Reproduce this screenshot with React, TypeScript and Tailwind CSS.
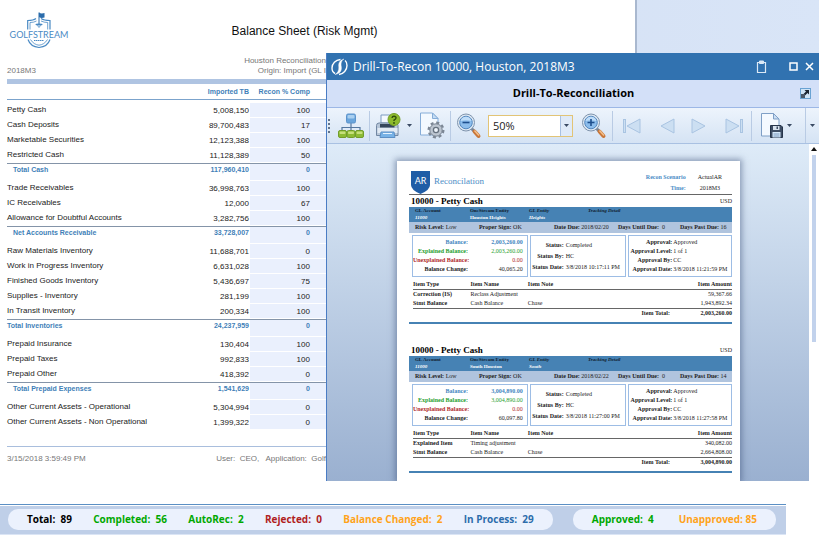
import { ReactNode } from "react";

interface BalanceRow {
  name: string;
  amount: string;
  percent: string;
  total?: boolean;
  indent?: boolean;
}

const balanceRows: BalanceRow[] = [
  { name: "Petty Cash", amount: "5,008,150", percent: "100" },
  { name: "Cash Deposits", amount: "89,700,483", percent: "17" },
  { name: "Marketable Securities", amount: "12,123,388", percent: "100" },
  { name: "Restricted Cash", amount: "11,128,389", percent: "50" },
  { name: "Total Cash", amount: "117,960,410", percent: "0", total: true, indent: true },
  { name: "Trade Receivables", amount: "36,998,763", percent: "100" },
  { name: "IC Receivables", amount: "12,000", percent: "67" },
  { name: "Allowance for Doubtful Accounts", amount: "3,282,756", percent: "100" },
  { name: "Net Accounts Receivable", amount: "33,728,007", percent: "0", total: true, indent: true },
  { name: "Raw Materials Inventory", amount: "11,688,701", percent: "0" },
  { name: "Work in Progress Inventory", amount: "6,631,028", percent: "100" },
  { name: "Finished Goods Inventory", amount: "5,436,697", percent: "75" },
  { name: "Supplies - Inventory", amount: "281,199", percent: "100" },
  { name: "In Transit Inventory", amount: "200,334", percent: "100" },
  { name: "Total Inventories", amount: "24,237,959", percent: "0", total: true },
  { name: "Prepaid Insurance", amount: "130,404", percent: "100" },
  { name: "Prepaid Taxes", amount: "992,833", percent: "100" },
  { name: "Prepaid Other", amount: "418,392", percent: "0" },
  { name: "Total Prepaid Expenses", amount: "1,541,629", percent: "0", total: true, indent: true },
  { name: "Other Current Assets - Operational", amount: "5,304,994", percent: "0" },
  { name: "Other Current Assets - Non Operational", amount: "1,399,322", percent: "0" },
];

interface Recon {
  entity: string;
  glEntity: string;
  dateDue: string;
  pastDue: string;
  balance: string;
  change: string;
  statusDate: string;
  approvalDate: string;
  items: string[][];
}

const recons: Recon[] = [
  {
    entity: "Houston Heights",
    glEntity: "Heights",
    dateDue: "2018/02/20",
    pastDue: "16",
    balance: "2,003,260.00",
    change: "40,065.20",
    statusDate: "3/8/2018 10:17:11 PM",
    approvalDate: "3/8/2018 11:21:59 PM",
    items: [
      ["Correction (IS)", "Reclass Adjustment", "", "59,367.66"],
      ["Stmt Balance", "Cash Balance", "Chase", "1,943,892.34"],
    ],
  },
  {
    entity: "South Houston",
    glEntity: "South",
    dateDue: "2018/02/22",
    pastDue: "14",
    balance: "3,004,890.00",
    change: "60,097.80",
    statusDate: "3/8/2018 11:27:00 PM",
    approvalDate: "3/8/2018 11:27:58 PM",
    items: [
      ["Explained Item", "Timing adjustment", "", "340,082.00"],
      ["Stmt Balance", "Cash Balance", "Chase", "2,664,808.00"],
    ],
  },
];

function GolfstreamLogo() {
  return (
    <svg width="62" height="40" viewBox="0 0 62 40" fill="none" stroke="#4a8ac4" role="img" aria-label="Golfstream">
      <path d="M19.700 17.500V8.500Q25.500 8.500 28 6.500M33 6.500Q36 8.500 42 8.500V17.500" strokeWidth="1.200" />
      <path d="M22 17.500V10.500Q26 10.500 28.500 9M33 9Q36 10.500 39.700 10.500V17.500" strokeWidth="0.800" />
      <path d="M20 27.500C21.500 32 26 35 31 35.500C36 35 40.500 32 42 27.500" strokeWidth="1.200" />
      <path d="M22.500 27.500C24.500 31 28 33 31 33.200C34 33 37.500 31 39.500 27.500" strokeWidth="0.800" />
      <path d="M31 0.500V12" stroke="#2b6cab" strokeWidth="1" />
      <path d="M31 0.500Q33 2 36.500 1V5.500Q33 6.500 31 5Z" fill="#2b6cab" stroke="none" />
      <ellipse cx="31" cy="12.500" rx="3.500" ry="1" fill="#4a8ac4" stroke="none" />
      <path d="M29.500 13.500L31 15.500L32.500 13.500" strokeWidth="0.800" />
      <text x="31" y="26" textAnchor="middle" fontSize="9" fill="#4a8ac4" stroke="none" className="font-['Lato',sans-serif]">
        GOLFSTREAM
      </text>
      <path d="M26 28.500H36" strokeWidth="1" strokeDasharray="1.500 0.500" />
    </svg>
  );
}

function BalanceTable() {
  return (
    <table className="w-full table-fixed border-separate border-spacing-0 text-[8px] leading-[13px] text-[#222]">
      <thead>
        <tr className="text-[7px] text-[#3f7fb8]">
          <th aria-label="Account" className="h-4 border-b border-[#7ba3cc]" />
          <th className="w-[90px] border-b border-[#7ba3cc] pr-px text-right">Imported TB</th>
          <th className="w-[76px] border-b border-[#7ba3cc] pr-4 text-right">Recon % Comp</th>
        </tr>
        <tr className="h-[3px]" />
      </thead>
      <tbody>
        {balanceRows.map((row) =>
          row.total ? (
            <tr key={row.name} className="h-[18px] align-top text-[7px] leading-3 font-bold text-[#3f7fb8]">
              <td className={`border-t border-[#8494a8] p-0 ${row.indent ? "pl-[6px]" : ""}`}>{row.name}</td>
              <td className="border-t border-[#8494a8] p-0 pr-px text-right">{row.amount}</td>
              <td className="border-t border-b border-t-[#8494a8] border-b-white bg-[#eaf0fd] p-0 pr-4 text-right">{row.percent}</td>
            </tr>
          ) : (
            <tr key={row.name} className="h-[15px] align-top">
              <td className="p-0 whitespace-nowrap">{row.name}</td>
              <td className="p-0 pt-px pr-px text-right">{row.amount}</td>
              <td className="border-b border-white bg-[#eaf0fd] p-0 pt-px pr-4 text-right">{row.percent}</td>
            </tr>
          )
        )}
      </tbody>
    </table>
  );
}

function SheetHeader() {
  return (
    <div className="bg-linear-to-r from-[#cfdcf2] to-[#d9e5f7]">
      <div className="w-[77.8%] border-r-2 border-[#a9b8cf]">
        <header className="flex items-start bg-white pt-3 pb-1 pl-2 font-['Liberation_Sans',Arial,sans-serif]">
          <GolfstreamLogo />
          <h1 className="flex-1 pt-[11px] pr-24 text-center text-[12px] leading-4 text-[#111]">
            Balance Sheet (Risk Mgmt)
          </h1>
        </header>
      </div>
    </div>
  );
}

function SheetBody() {
  return (
    <div className="w-[39.8%] pl-[7px] font-['Liberation_Sans',Arial,sans-serif]">
      <div className="flex items-end justify-between text-[8px] leading-[10px] text-[#777]">
        <span>2018M3</span>
        <span className="text-right">
          Houston Reconciliation
          <br />
          Origin: Import (GL I
        </span>
      </div>
      <div className="mt-[3px] h-[5px] bg-[#afc4e2]" />
      <BalanceTable />
      <footer className="mt-4 flex justify-between border-t border-[#a9bedd] pt-[6px] pb-[17px] text-[8px] leading-[11px] text-[#777]">
        <span>3/15/2018 3:59:49 PM</span>
        <span className="whitespace-pre">User:  CEO,   Application:  Golf</span>
      </footer>
    </div>
  );
}

function ToolButton({ label, className = "", children }: { label: string; className?: string; children: ReactNode }) {
  return (
    <button type="button" aria-label={label} className={`flex shrink-0 items-center justify-center ${className}`}>
      {children}
    </button>
  );
}

function Separator() {
  return <span className="mx-[5px] h-[30px] w-px shrink-0 bg-[#b9cbe4]" />;
}

function Caret() {
  return (
    <svg width="5" height="3" viewBox="0 0 5 3" fill="#3a4a63">
      <path d="M0 0H5L2.500 3Z" />
    </svg>
  );
}

function OrgIcon() {
  return (
    <svg width="26" height="26" viewBox="0 0 26 26">
      <path d="M13 10V17M4 18V14.500H22V18" stroke="#55779f" strokeWidth="1.200" fill="none" />
      <rect x="8.500" y="1" width="9" height="9" rx="1.500" fill="#6aa5dc" stroke="#5c93cb" />
      <rect x="9.500" y="2" width="7" height="3.500" rx="1" fill="#a9cff0" />
      {[0.5, 9, 17.5].map((x) => (
        <g key={x}>
          <rect x={x} y="17.500" width="8" height="7" rx="1.500" fill="#8dbb35" stroke="#719d2c" />
          <rect x={x + 1} y="18.500" width="6" height="2.500" rx="1" fill="#c6e07c" />
        </g>
      ))}
    </svg>
  );
}

function PrinterIcon() {
  return (
    <svg width="26" height="26" viewBox="0 0 26 26">
      <path d="M6 9V2H15L19 6V10H6Z" fill="#f4f9ff" stroke="#7d9cc2" />
      <path d="M1.500 12.500Q1.500 10 4 10H20.500Q23 10 23 12.500V22.500H1.500Z" fill="#b7c6d8" stroke="#7287a2" />
      <rect x="5" y="11" width="14.500" height="3.500" fill="#35465c" />
      <rect x="2.500" y="15" width="20" height="5" fill="#e2eaf3" />
      <path d="M6 19H19L20 24.500H5Z" fill="#78b2e6" stroke="#5c8fc5" />
      <path d="M8 20.500H17" stroke="#e6f3ff" />
      <circle cx="19" cy="6.500" r="6" fill="#8dbb2d" stroke="#729c27" />
      <path d="M17 5Q17.200 3.200 19 3.200Q21.200 3.200 21 5Q20.800 6.200 19 7.200V8" stroke="#2f4d0c" strokeWidth="1.400" fill="none" />
      <circle cx="19" cy="10" r="0.900" fill="#2f4d0c" />
    </svg>
  );
}

function PageGearIcon() {
  return (
    <svg width="26" height="27" viewBox="0 0 26 27">
      <path d="M1.500 1H13.500L19 6.500V23H1.500Z" fill="#f3f9ff" stroke="#86add8" />
      <path d="M13.500 1V6.500H19Z" fill="#c4dcf4" stroke="#86add8" />
      <circle cx="17" cy="18" r="7.300" fill="none" stroke="#7b8694" strokeWidth="2.400" strokeDasharray="3 2.730" />
      <circle cx="17" cy="18" r="6.200" fill="#bcc5d0" stroke="#7b8694" strokeWidth="1" />
      <circle cx="17" cy="18" r="2.600" fill="#edf3fa" stroke="#66727f" strokeWidth="1.300" />
    </svg>
  );
}

function MagnifierIcon({ plus = false }: { plus?: boolean }) {
  return (
    <svg width="26" height="26" viewBox="0 0 26 26">
      <path d="M15.500 15.500L19 19" stroke="#7a8594" strokeWidth="3" />
      <path d="M18.500 18.500L22.500 23" stroke="#c9773a" strokeWidth="4" strokeLinecap="round" />
      <path d="M18.500 17.500L23 22.500" stroke="#f3c08c" strokeWidth="1.500" />
      <circle cx="10" cy="9.500" r="8.500" fill="#dfe9f4" stroke="#7f94ad" />
      <circle cx="10" cy="9.500" r="6.300" fill="#8cbdec" stroke="#5286bd" />
      <path d="M4.500 8Q6 3.800 10 3.800Q14 3.800 15.500 8Q10 6.500 4.500 8Z" fill="#bfddf9" />
      <path d={plus ? "M6.500 9.500H13.500M10 6V13" : "M6.500 9.500H13.500"} stroke="#1e4f8d" strokeWidth="1.600" />
    </svg>
  );
}

function NavIcon({ flip = false, bar = false }: { flip?: boolean; bar?: boolean }) {
  return (
    <svg width="18" height="16" viewBox="0 0 18 16" fill="#ccdff2" stroke="#a9c4e2" className={flip ? "-scale-x-100" : ""}>
      {bar && <rect x="0.500" y="1.500" width="2" height="13" />}
      <path d="M17 1V15L4 8Z" />
    </svg>
  );
}

function SaveIcon() {
  return (
    <svg width="24" height="27" viewBox="0 0 24 27">
      <path d="M1.500 1.500H13.500L19 7V24H1.500Z" fill="#f4f9ff" stroke="#7f9fc6" />
      <path d="M13.500 1.500V7H19Z" fill="#c9def4" stroke="#7f9fc6" />
      <path d="M10.500 13.500H21L22.500 15V25.500H10.500Z" fill="#3d4d64" stroke="#26354a" />
      <rect x="13" y="14" width="6.500" height="4" fill="#d7e2ee" />
      <rect x="16.500" y="14.500" width="1.500" height="2.500" fill="#3d4d64" />
      <rect x="12.500" y="20" width="8" height="5.500" fill="#d4e8fa" />
      <path d="M13.500 22H19.500M13.500 24H19.500" stroke="#6587ad" strokeWidth="0.800" />
    </svg>
  );
}

function Toolbar() {
  return (
    <div className="flex h-9 items-center border-b border-[#a9c1e2] bg-linear-to-b from-[#edf4fc] to-[#d5e3f4]">
      <svg width="3" height="14" viewBox="0 0 3 14" fill="#62738c" className="mx-px shrink-0">
        <path d="M0 0H2V2H0ZM0 4H2V6H0ZM0 8H2V10H0ZM0 12H2V14H0Z" />
      </svg>
      <ToolButton label="Parameters" className="ml-[6px]"><OrgIcon /></ToolButton>
      <Separator />
      <ToolButton label="Print"><PrinterIcon /></ToolButton>
      <ToolButton label="Print options" className="w-[18px]"><Caret /></ToolButton>
      <ToolButton label="Page setup"><PageGearIcon /></ToolButton>
      <Separator />
      <ToolButton label="Zoom out"><MagnifierIcon /></ToolButton>
      <div className="relative mr-2 ml-[6px] h-[22px] w-[85px]">
        <select
          aria-label="Zoom level"
          className="block h-full w-full appearance-none border border-[#e2c476] bg-white pl-1 font-['Open_Sans','Noto_Sans',sans-serif] text-[11px] leading-4 text-[#222]"
        >
          <option>50%</option>
        </select>
        <span className="pointer-events-none absolute inset-y-px right-px flex w-3 items-center justify-center border-l border-[#a9c1e2] bg-[#dfeaf8]">
          <Caret />
        </span>
      </div>
      <ToolButton label="Zoom in"><MagnifierIcon plus /></ToolButton>
      <Separator />
      <div className="ml-[5px] flex gap-4">
        <ToolButton label="First page"><NavIcon bar /></ToolButton>
        <ToolButton label="Previous page"><NavIcon /></ToolButton>
        <ToolButton label="Next page"><NavIcon flip /></ToolButton>
        <ToolButton label="Last page"><NavIcon flip bar /></ToolButton>
      </div>
      <span className="mx-2 h-[30px] w-px shrink-0 bg-[#b9cbe4]" />
      <ToolButton label="Export"><SaveIcon /></ToolButton>
      <ToolButton label="Export options" className="w-3"><Caret /></ToolButton>
      <ToolButton label="More tools" className="ml-auto h-full w-[14px] border-l border-[#b9cbe4]"><Caret /></ToolButton>
    </div>
  );
}

function Fact({ label, value }: { label: string; value: string }) {
  return (
    <span className="whitespace-pre">
      <b>{label}</b> {value}
    </span>
  );
}

function ReconSection({ recon }: { recon: Recon }) {
  const balances = [
    ["Balance:", recon.balance, "font-bold text-[#3f86c0]"],
    ["Explained Balance:", recon.balance, "text-[#1fa02f]"],
    ["Unexplained Balance:", "0.00", "text-[#b02a2a]"],
    ["Balance Change:", recon.change, "text-[#222]"],
  ];
  const status = [
    ["Status:", "Completed"],
    ["Status By:", "HC"],
    ["Status Date:", recon.statusDate],
  ];
  const approval = [
    ["Approval:", "Approved"],
    ["Approval Level:", "1 of 1"],
    ["Approval By:", "CC"],
    ["Approval Date:", recon.approvalDate],
  ];

  return (
    <section className="mb-5 border-b-2 border-[#4682b4] pb-1 text-[6px] leading-[9px] text-[#222]">
      <div className="flex h-3 items-center justify-between pl-[2px]">
        <h3 className="text-[9px] font-bold text-black">10000 - Petty Cash</h3>
        <span>USD</span>
      </div>
      <div className="grid grid-cols-[55fr_59fr_59fr_144fr] bg-[#4682b4] pb-px pl-[6px] text-[5px] leading-[7px] font-bold text-white">
        <div><p className="text-[#101c2c]">GL Account</p><p className="italic">11000</p></div>
        <div><p className="text-[#101c2c]">OneStream Entity</p><p>{recon.entity}</p></div>
        <div className="italic"><p className="text-[#101c2c]">GL Entity</p><p>{recon.glEntity}</p></div>
        <p className="text-[#101c2c] italic">Tracking Detail</p>
      </div>
      <div className="grid h-[11px] grid-cols-[64fr_75fr_64fr_62fr_52fr] items-center bg-[#b0c4de] pl-[6px]">
        <Fact label="Risk Level:" value="Low" />
        <Fact label="Proper Sign:" value="OK" />
        <Fact label="Date Due:" value={recon.dateDue} />
        <Fact label="Days Until Due:" value=" 0" />
        <Fact label="Days Past Due:" value={recon.pastDue} />
      </div>
      <div className="mt-[2px] ml-[3px] grid grid-cols-[115fr_96fr_103fr] gap-[2px]">
        <dl className="border border-[#9dbde5] py-[2px] pr-1">
          {balances.map(([label, value, color]) => (
            <div key={label} className={`flex justify-between ${color}`}>
              <dt className="w-[55px] text-right font-bold whitespace-nowrap">{label}</dt>
              <dd>{value}</dd>
            </div>
          ))}
        </dl>
        <dl className="flex flex-col justify-center gap-[2px] border border-[#9dbde5]">
          {status.map(([label, value]) => (
            <div key={label} className="flex gap-[2px]">
              <dt className="w-[33px] text-right font-bold whitespace-nowrap">{label}</dt>
              <dd className="whitespace-nowrap">{value}</dd>
            </div>
          ))}
        </dl>
        <dl className="border border-[#9dbde5] py-[2px]">
          {approval.map(([label, value]) => (
            <div key={label} className="flex gap-px">
              <dt className="w-[43px] text-right font-bold whitespace-nowrap">{label}</dt>
              <dd className="whitespace-nowrap">{value}</dd>
            </div>
          ))}
        </dl>
      </div>
      <table className="mt-[3px] ml-1 w-[calc(100%-4px)] table-fixed border-separate border-spacing-0 text-left">
        <thead>
          <tr>
            <th className="w-[18%] border-b border-[#666] p-0">Item Type</th>
            <th className="w-[18%] border-b border-[#666] p-0">Item Name</th>
            <th className="w-[18%] border-b border-[#666] p-0">Item Note</th>
            <th className="border-b border-[#666] p-0 text-right">Item Amount</th>
          </tr>
        </thead>
        <tbody>
          {recon.items.map(([type, name, note, amount]) => (
            <tr key={type}>
              <td className="p-0 font-bold">{type}</td>
              <td className="p-0 whitespace-nowrap">{name}</td>
              <td className="p-0">{note}</td>
              <td className="p-0 text-right">{amount}</td>
            </tr>
          ))}
        </tbody>
        <tfoot>
          <tr className="font-bold">
            <td colSpan={4} className="border-t border-[#666] p-0">
              <span className="flex justify-end">
                Item Total:
                <span className="w-[62px] text-right">{recon.balance}</span>
              </span>
            </td>
          </tr>
        </tfoot>
      </table>
    </section>
  );
}

function ReconReport() {
  return (
    <article className="h-full overflow-hidden bg-white pt-[10px] pr-2 pl-3 font-['Liberation_Serif','Times_New_Roman',serif] shadow-[0_0_6px_2px_rgba(60,80,120,0.5)]">
      <header className="flex justify-between border-b border-[#666]">
        <div className="flex items-start pl-[2px]">
          <svg width="19" height="23" viewBox="0 0 19 23">
            <path d="M0 0H19V14Q19 19 9.500 23Q0 19 0 14Z" fill="#1f5da6" />
            <text x="9.500" y="13" textAnchor="middle" fontSize="9" fill="#fff" className="font-['Lato',sans-serif]">AR</text>
          </svg>
          <h2 className="pl-1 text-[9px] leading-[21px] text-[#4c8dc6]">Reconcilation</h2>
        </div>
        <dl className="grid grid-cols-[auto_auto] gap-x-3 pt-[2px] pr-[10px] text-[6px] leading-[9px]">
          <dt className="text-right font-bold text-[#4c8dc6]">Recon Scenario</dt>
          <dd className="text-center text-[#222]">ActualAR</dd>
          <dt className="text-right font-bold text-[#4c8dc6]">Time:</dt>
          <dd className="text-center text-[#222]">2018M3</dd>
        </dl>
      </header>
      {recons.map((recon) => (
        <ReconSection key={recon.entity} recon={recon} />
      ))}
    </article>
  );
}

function ReconWindow() {
  return (
    <section className="absolute top-[53px] right-0 bottom-0 left-[39.8%] flex flex-col border-l border-[#4a7cc4] font-['Open_Sans','Noto_Sans',sans-serif]">
      <header className="flex h-[27px] shrink-0 items-center bg-[#3172b0] pr-[5px] pl-1 text-white">
        <svg width="17" height="18" viewBox="0 0 17 18" fill="none" stroke="#fff" className="shrink-0">
          <path d="M9.500 1.500C4.500 2 1 5.500 1 10C1 12.500 2 14.500 4 15.500" strokeWidth="1.400" />
          <path d="M14 2.500C15.500 3.500 16 5.500 16 7.500C16 12 12.500 16 8 16.500" strokeWidth="1.400" />
          <path d="M13 1C7.500 2.500 7.500 6.500 7.800 9C8 12 7 15 4 16.500C10 15.500 10.800 12 10.300 8.500C9.900 5.500 10 3 13 1Z" fill="#fff" strokeWidth="0.400" />
        </svg>
        <h2 className="flex-1 pl-[5px] text-[12px] leading-4 whitespace-nowrap">Drill-To-Recon 10000, Houston, 2018M3</h2>
        <ToolButton label="Copy" className="mr-[22px]">
          <svg width="11" height="13" viewBox="0 0 11 13" fill="none" stroke="#dce9f6">
            <path d="M1.500 2.500H9.500V12.500H1.500Z" strokeWidth="1.200" />
            <path d="M3.500 1H7.500V3.500H3.500Z" fill="#dce9f6" />
          </svg>
        </ToolButton>
        <ToolButton label="Maximize" className="mr-[7px]">
          <svg width="9" height="9" viewBox="0 0 9 9" fill="none" stroke="#fff" strokeWidth="1.500">
            <rect x="1" y="1" width="7" height="7" />
          </svg>
        </ToolButton>
        <ToolButton label="Close">
          <svg width="9" height="9" viewBox="0 0 9 9" fill="none" stroke="#fff" strokeWidth="1.500">
            <path d="M1 1L8 8M8 1L1 8" />
          </svg>
        </ToolButton>
      </header>
      <div className="flex h-[28px] shrink-0 items-center border-b border-[#9cb7e6] bg-[#d3e0f8] pr-2 pl-5">
        <h3 className="flex-1 text-center text-[11px] font-bold text-black">Drill-To-Reconciliation</h3>
        <ToolButton label="Detach">
          <svg width="11" height="11" viewBox="0 0 11 11">
            <rect x="0.500" y="0.500" width="10" height="10" fill="#cfe4f7" stroke="#6aa3d3" />
            <path d="M4.500 2H9V6.500L7.500 5L5 7.500L3.500 6L6 3.500Z" fill="#1b2533" />
            <path d="M1 6H5V10H1Z" fill="#4a5768" />
          </svg>
        </ToolButton>
      </div>
      <Toolbar />
      <div className="flex min-h-0 flex-1">
        <div className="min-w-0 flex-1 overflow-hidden bg-linear-to-b from-[#deebf8] to-[#9ab0d0] pt-[17px] pr-[69px] pl-[70px]">
          <ReconReport />
        </div>
        <div className="flex w-[10px] flex-col items-center bg-white pt-[3px]">
          <svg width="6" height="4" viewBox="0 0 6 4">
            <path d="M0 4L3 0L6 4Z" fill="#111" />
          </svg>
          <div className="mt-1 h-[56%] w-1 bg-[#c2d2ec]" />
        </div>
      </div>
    </section>
  );
}

function StatusBar() {
  return (
    <footer className="mt-[23px] mr-[33px] border-t border-[#5b8fc4] pt-px font-['Open_Sans','Noto_Sans',sans-serif] text-[10px] leading-[21px] font-bold whitespace-pre">
      <div className="flex gap-5 border-b border-[#dbe5f5] bg-[#bfcfe8] pt-[3px] pr-[10px] pb-1 pl-2">
        <div className="flex flex-[506] justify-between rounded-[10px] bg-[#ebf1fd] px-[19px]">
          <span className="text-black">Total:  89</span>
          <span className="text-[#00a800]">Completed:  56</span>
          <span className="text-[#00a800]">AutoRec:  2</span>
          <span className="text-[#b01e1e]">Rejected:  0</span>
          <span className="text-[#ffa31a]">Balance Changed:  2</span>
          <span className="text-[#2c6cab]">In Process:  29</span>
        </div>
        <div className="flex flex-[165] justify-between rounded-[10px] bg-[#ebf1fd] px-[19px]">
          <span className="text-[#00a800]">Approved:  4</span>
          <span className="text-[#ffa31a]">Unapproved: 85</span>
        </div>
      </div>
    </footer>
  );
}

export default function App() {
  return (
    <div className="min-h-screen bg-white">
      <main className="relative">
        <SheetHeader />
        <SheetBody />
        <ReconWindow />
      </main>
      <StatusBar />
    </div>
  );
}
